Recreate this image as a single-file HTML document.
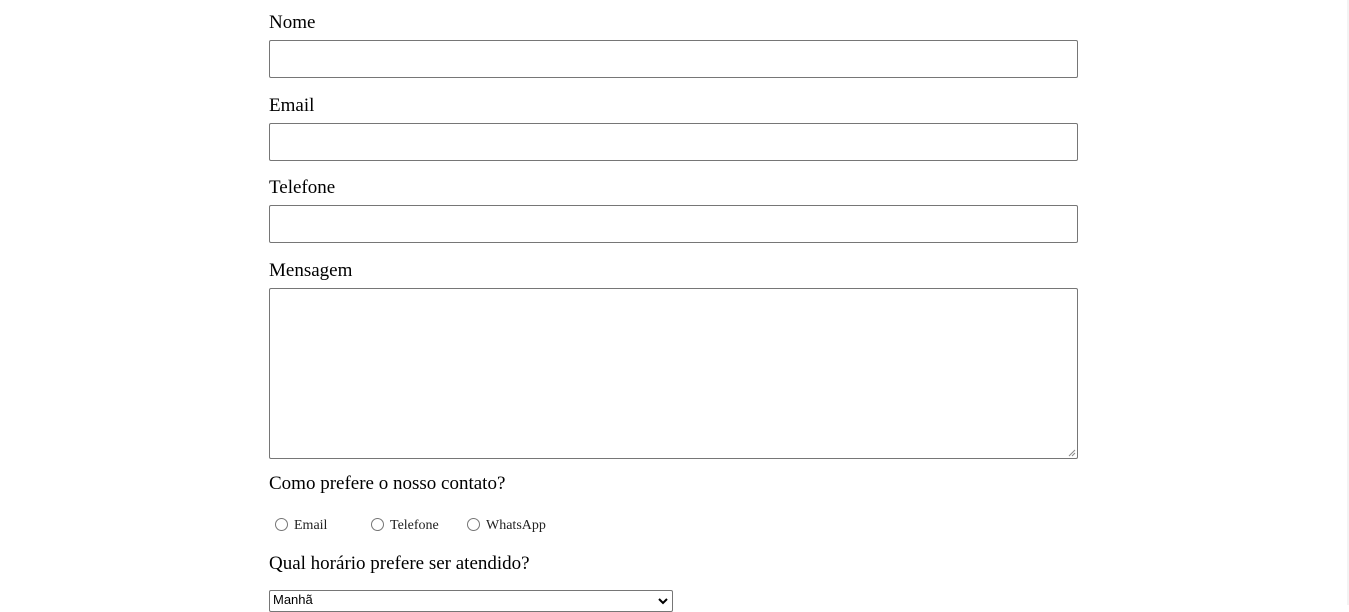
<!DOCTYPE html>
<html><head><style>
body{margin:0;width:1349px;height:605px;overflow:hidden;background:#fff;font-family:"Liberation Serif",serif;color:#000;position:relative}
.l{position:absolute;left:269px;font-size:19px;line-height:22px}
.i{position:absolute;left:269px;width:807px;border:1px solid #767676;border-radius:2px;background:#fff}
.r{position:absolute;top:518px;width:11px;height:11px;border:1px solid #767676;border-radius:50%}
.t{position:absolute;top:518px;font-size:14px;line-height:16px;color:#222}
.sb{position:absolute;right:0;top:0;width:2px;height:605px;background:#f3f3f3}
</style></head><body>
<div class="l" style="top:12px">Nome</div>
<div class="i" style="top:40px;height:36px"></div>
<div class="l" style="top:95px">Email</div>
<div class="i" style="top:123px;height:36px"></div>
<div class="l" style="top:177px">Telefone</div>
<div class="i" style="top:205px;height:36px"></div>
<div class="l" style="top:260px">Mensagem</div>
<div class="i" style="top:288px;height:169px"><svg style="position:absolute;right:1px;bottom:1px" width="8" height="8"><path d="M7 1L1 7M7 4L4 7" stroke="#888" stroke-width="1"/></svg></div>
<div class="l" style="top:473px">Como prefere o nosso contato?</div>
<div class="r" style="left:275px"></div><div class="t" style="left:294px">Email</div>
<div class="r" style="left:371px"></div><div class="t" style="left:390px">Telefone</div>
<div class="r" style="left:467px"></div><div class="t" style="left:486px">WhatsApp</div>
<div class="l" style="top:553px">Qual horário prefere ser atendido?</div>
<div style="position:absolute;left:269px;top:590px;height:22px;border:1px solid #767676;border-radius:2px;font-family:'Liberation Sans',sans-serif;font-size:13px;line-height:18px;padding-left:3px;box-sizing:border-box;width:404px">Manhã<svg style="position:absolute;right:4px;top:7px" width="10" height="7"><path d="M1 1L5 5L9 1" stroke="#000" stroke-width="2" fill="none"/></svg></div>
<div class="sb"></div>
</body></html>
